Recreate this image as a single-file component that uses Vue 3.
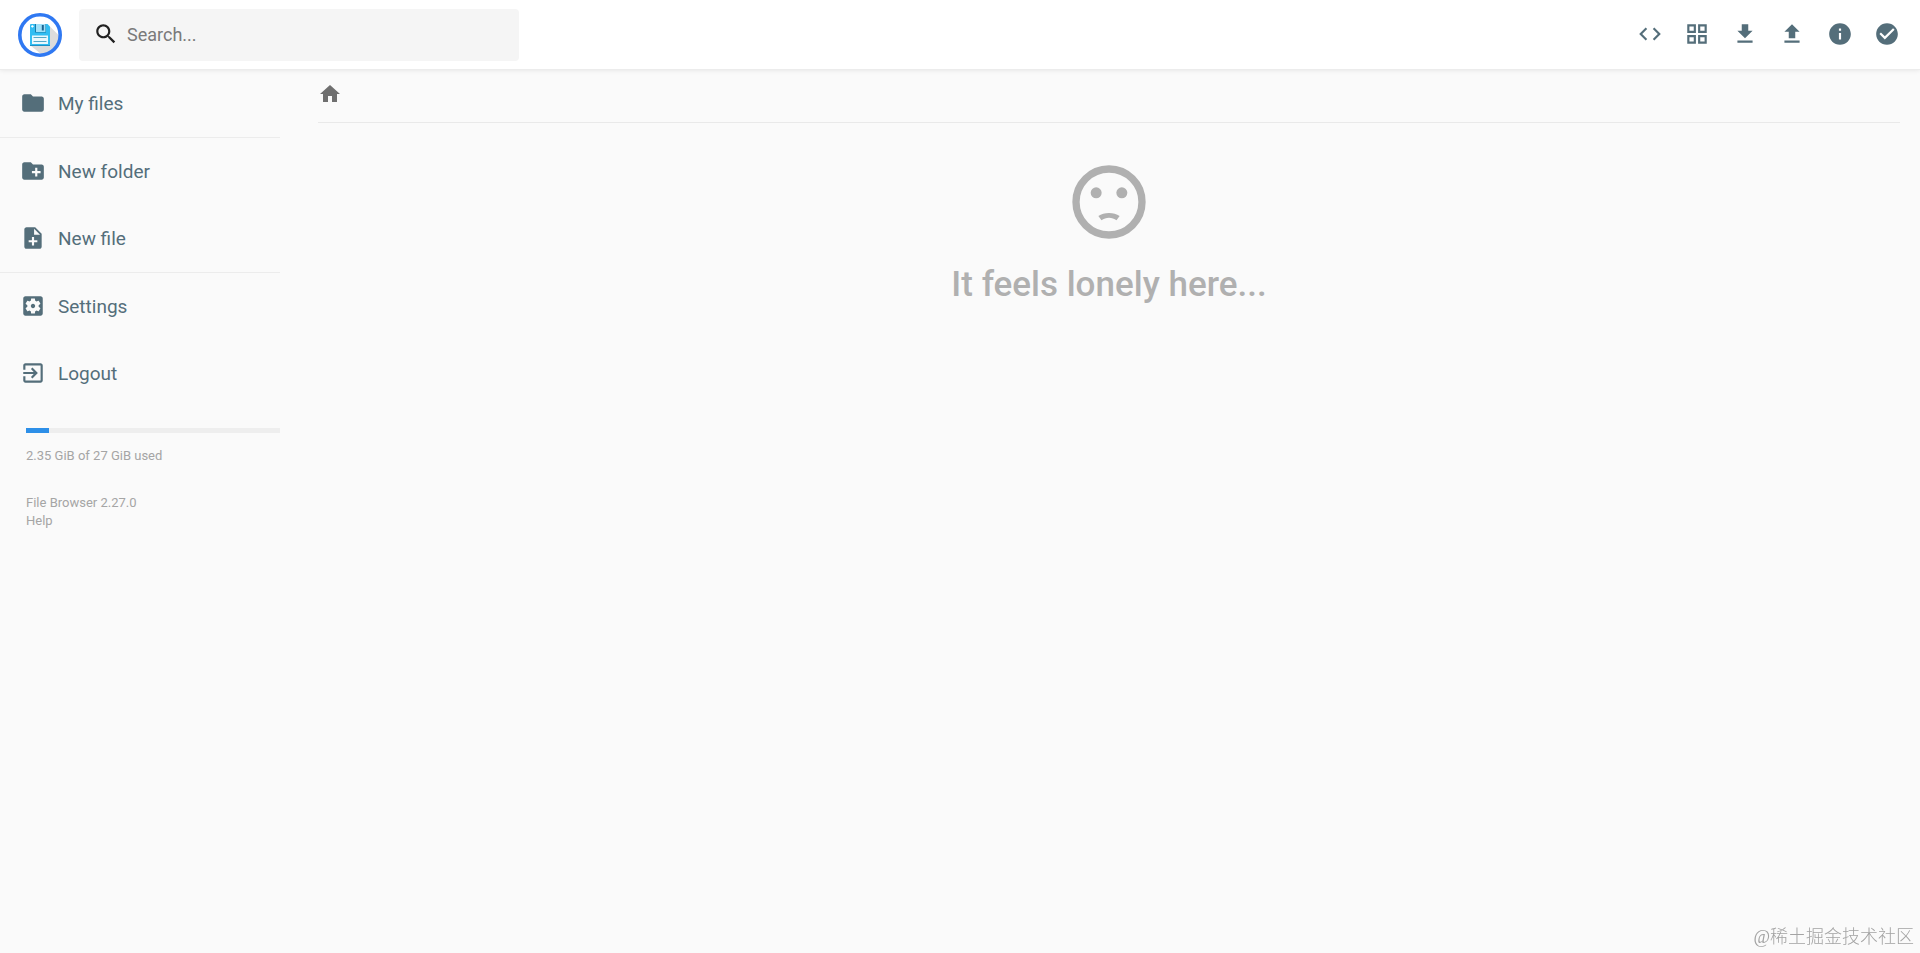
<template>
  <div class="app">
    <!-- Header -->
    <header class="header">
      <svg class="logo" viewBox="0 0 44 44" role="img" aria-label="File Browser">
        <circle cx="22" cy="22" r="20" fill="#fff" />
        <path d="M31.5 13L41 22.5A19 19 0 0 1 23 41L12.5 32.5z" fill="#dcdcdc" />
        <circle cx="22" cy="22" r="20.2" fill="none" stroke="#2f78f2" stroke-width="3.6" />
        <path d="M13 11h16.5l2.5 2.5V32a1 1 0 0 1-1 1H13a1 1 0 0 1-1-1V12a1 1 0 0 1 1-1z" fill="#31bdf2" />
        <path d="M17 11h11v8.5H17z" fill="#1879a8" />
        <path d="M18 11h9.5v8H18z" fill="#9fe0f8" />
        <path d="M23.8 12h2v5.5h-2z" fill="#1c6391" />
        <path d="M13.2 13.4h2.4M14.4 12.2v2.4" stroke="#fff" stroke-width="1.2" />
        <path d="M14 22.5h16V31H14z" fill="#e9f8fd" />
        <path d="M15.5 24.5h13M15.5 28.5h13" stroke="#54a8c8" stroke-width="1" />
        <path d="M12 32h20v1H12z" fill="#1e8fc4" />
      </svg>
      <label class="search">
        <svg class="icon" viewBox="0 0 24 24"><path :d="icons.search" /></svg>
        <input v-model="query" type="text" aria-label="Search" placeholder="Search..." />
      </label>
      <div class="toolbar">
        <button v-for="a in actions" :key="a.icon" class="tool-btn" :aria-label="a.label">
          <svg class="icon" viewBox="0 0 24 24"><path :d="icons[a.icon]" /></svg>
        </button>
      </div>
    </header>

    <div class="body">
      <!-- Sidebar -->
      <nav class="sidebar">
        <div v-for="(group, i) in menu" :key="i" class="menu-group">
          <button v-for="item in group" :key="item.label" class="menu-item">
            <svg class="icon" viewBox="0 0 24 24"><path :d="icons[item.icon]" /></svg>
            <span>{{ item.label }}</span>
          </button>
        </div>

        <div class="usage">
          <div class="usage-bar">
            <div class="usage-fill" :style="{ width: usedPercent + '%' }"></div>
          </div>
          <span>{{ used }} GiB of {{ total }} GiB used</span>
        </div>

        <div class="credits">
          <a href="#">File Browser 2.27.0</a>
          <a href="#">Help</a>
        </div>
      </nav>

      <!-- File listing -->
      <main class="main">
        <div class="breadcrumbs">
          <a href="#" aria-label="Home">
            <svg viewBox="0 0 24 24"><path :d="icons.home" /></svg>
          </a>
        </div>
        <h2 class="message">
          <svg viewBox="0 0 24 24">
            <circle cx="12" cy="12" r="9" fill="none" stroke="currentColor" stroke-width="2" />
            <circle cx="8.5" cy="9.5" r="1.5" />
            <circle cx="15.5" cy="9.5" r="1.5" />
            <path d="M12 15c-1.1 0-2.1.3-2.9.85l.85 1.1c.6-.4 1.3-.65 2.05-.65s1.45.25 2.05.65l.85-1.1c-.8-.55-1.8-.85-2.9-.85z" />
          </svg>
          <span>It feels lonely here...</span>
        </h2>
      </main>
    </div>

    <div class="watermark">@稀土掘金技术社区</div>
  </div>
</template>

<script setup>
import { ref, computed } from 'vue'

const query = ref('')
const used = ref(2.35)
const total = ref(27)
const usedPercent = computed(() => Math.ceil((used.value / total.value) * 100))

const actions = [
  { icon: 'code', label: 'Toggle shell' },
  { icon: 'grid', label: 'Switch view' },
  { icon: 'download', label: 'Download' },
  { icon: 'upload', label: 'Upload' },
  { icon: 'info', label: 'Info' },
  { icon: 'check', label: 'Select multiple' },
]

const menu = [
  [{ icon: 'folder', label: 'My files' }],
  [
    { icon: 'newFolder', label: 'New folder' },
    { icon: 'newFile', label: 'New file' },
  ],
  [
    { icon: 'settings', label: 'Settings' },
    { icon: 'logout', label: 'Logout' },
  ],
]

const icons = {
  search: 'M15.5 14h-.79l-.28-.27C15.41 12.59 16 11.11 16 9.5 16 5.91 13.09 3 9.5 3S3 5.91 3 9.5 5.91 16 9.5 16c1.61 0 3.09-.59 4.23-1.57l.27.28v.79l5 4.99L20.49 19l-4.99-5zm-6 0C7.01 14 5 11.99 5 9.5S7.01 5 9.5 5 14 7.01 14 9.5 11.99 14 9.5 14z',
  code: 'M9.4 16.6L4.8 12l4.6-4.6L8 6l-6 6 6 6 1.4-1.4zm5.2 0l4.6-4.6-4.6-4.6L16 6l6 6-6 6-1.4-1.4z',
  grid: 'M3 3v8h8V3H3zm6 6H5V5h4v4zm-6 4v8h8v-8H3zm6 6H5v-4h4v4zm4-16v8h8V3h-8zm6 6h-4V5h4v4zm-6 4v8h8v-8h-8zm6 6h-4v-4h4v4z',
  download: 'M19 9h-4V3H9v6H5l7 7 7-7zM5 18v2h14v-2H5z',
  upload: 'M9 16h6v-6h4l-7-7-7 7h4zm-4 2h14v2H5z',
  info: 'M12 2C6.48 2 2 6.48 2 12s4.48 10 10 10 10-4.48 10-10S17.52 2 12 2zm1 15h-2v-6h2v6zm0-8h-2V7h2v2z',
  check: 'M12 2C6.48 2 2 6.48 2 12s4.48 10 10 10 10-4.48 10-10S17.52 2 12 2zm-2 15l-5-5 1.41-1.41L10 14.17l7.59-7.59L19 8l-9 9z',
  folder: 'M10 4H4c-1.1 0-1.99.9-1.99 2L2 18c0 1.1.9 2 2 2h16c1.1 0 2-.9 2-2V8c0-1.1-.9-2-2-2h-8l-2-2z',
  newFolder: 'M20 6h-8l-2-2H4c-1.11 0-1.99.89-1.99 2L2 18c0 1.11.89 2 2 2h16c1.11 0 2-.89 2-2V8c0-1.11-.89-2-2-2zm-1 8h-3v3h-2v-3h-3v-2h3V9h2v3h3v2z',
  newFile: 'M14 2H6c-1.1 0-1.99.9-1.99 2L4 20c0 1.1.89 2 1.99 2H18c1.1 0 2-.9 2-2V8l-6-6zm2 14h-3v3h-2v-3H8v-2h3v-3h2v3h3v2zm-3-7V3.5L18.5 9H13z',
  settings: 'M12 10c-1.1 0-2 .9-2 2s.9 2 2 2 2-.9 2-2-.9-2-2-2zm7-7H5c-1.11 0-2 .9-2 2v14c0 1.1.89 2 2 2h14c1.11 0 2-.9 2-2V5c0-1.1-.89-2-2-2zm-1.75 9c0 .23-.02.46-.05.68l1.48 1.16c.13.11.17.3.08.45l-1.4 2.42c-.09.15-.27.21-.43.15l-1.74-.7c-.36.28-.76.51-1.18.69l-.26 1.85c-.03.17-.18.3-.35.3h-2.8c-.17 0-.32-.13-.35-.29l-.26-1.85c-.43-.18-.82-.41-1.18-.69l-1.74.7c-.16.06-.34 0-.43-.15l-1.4-2.42c-.09-.15-.05-.34.08-.45l1.48-1.16c-.03-.23-.05-.46-.05-.69 0-.23.02-.46.05-.68l-1.48-1.16c-.13-.11-.17-.3-.08-.45l1.4-2.42c.09-.15.27-.21.43-.15l1.74.7c.36-.28.76-.51 1.18-.69l.26-1.85c.03-.17.18-.3.35-.3h2.8c.17 0 .32.13.35.29l.26 1.85c.43.18.82.41 1.18.69l1.74-.7c.16-.06.34 0 .43.15l1.4 2.42c.09.15.05.34-.08.45l-1.48 1.16c.03.23.05.46.05.69z',
  logout: 'M10.09 15.59L11.5 17l5-5-5-5-1.41 1.41L12.67 11H3v2h9.67l-2.58 2.59zM19 3H5c-1.11 0-2 .9-2 2v4h2V5h14v14H5v-4H3v4c0 1.1.89 2 2 2h14c1.1 0 2-.9 2-2V5c0-1.1-.9-2-2-2z',
  home: 'M10 20v-6h4v6h5v-8h3L12 3 2 12h3v8z',
}
</script>

<style>
body {
  margin: 0;
  background: #fafafa;
}
</style>

<style scoped>
.app {
  min-height: 100vh;
  background: #fafafa;
  font-family: Roboto, sans-serif;
  color: #546e7a;
}

button { border: none; background: none; padding: 0; font: inherit; color: inherit; cursor: pointer; }
a { color: inherit; text-decoration: none; }
svg { display: block; fill: currentColor; }
.icon { width: 26px; height: 26px; flex-shrink: 0; }

.header {
  position: relative;
  display: flex;
  align-items: center;
  padding: 9px 9px 8px 18px;
  background: #fff;
  border-bottom: 1px solid #ececec;
  box-shadow: 0 0 5px rgba(0, 0, 0, 0.1);
}
.logo { width: 44px; height: 44px; margin-right: 17px; }
.search {
  display: flex;
  align-items: center;
  gap: 8px;
  width: 440px;
  height: 52px;
  box-sizing: border-box;
  padding: 0 14px 2px;
  background: #f5f5f5;
  border-radius: 4px;
  color: #212121;
}
.search input { flex: 1; min-width: 0; padding: 0; border: none; outline: none; background: none; font: inherit; font-size: 18px; color: #212121; }
.search input::placeholder { color: #7a7a7a; }
.toolbar { display: flex; width: 285px; margin-left: auto; }
.tool-btn { flex: 1; display: flex; justify-content: center; padding: 10px 0 12px; }

.body { display: flex; }
.sidebar { width: 280px; flex-shrink: 0; }
.menu-group + .menu-group { border-top: 1px solid #ececec; }
.menu-item {
  display: flex;
  align-items: center;
  gap: 12px;
  width: 100%;
  height: 67px;
  padding: 0 20px 1px;
  font-size: 19px;
}

.usage { margin: 21px 0 0 26px; font-size: 13px; line-height: 18px; color: #a5a5a5; }
.usage-bar { height: 5px; margin-bottom: 14px; background: #eee; }
.usage-fill { height: 5px; background: #2d8fe8; }
.credits { display: flex; flex-direction: column; align-items: flex-start; margin: 29px 0 0 26px; font-size: 13px; line-height: 18px; color: #a5a5a5; }

.main { flex: 1; padding: 0 20px 0 38px; }
.breadcrumbs { display: flex; height: 52px; align-items: center; border-bottom: 1px solid #e9e9e9; color: #6f6f6f; }
.breadcrumbs svg { width: 24px; height: 24px; margin-bottom: 4px; }

.message { display: flex; flex-direction: column; align-items: center; gap: 18px; margin: 35px 0 0; font-size: 35px; line-height: 42px; font-weight: 500; color: #b0b0b0; }
.message svg { width: 88px; height: 88px; }

.watermark {
  position: fixed;
  right: 6px;
  bottom: 4px;
  font-family: "Liberation Serif", "Noto Sans CJK SC", serif;
  font-size: 18px;
  line-height: 24px;
  font-weight: 300;
  color: #a3a3a3;
}
</style>
